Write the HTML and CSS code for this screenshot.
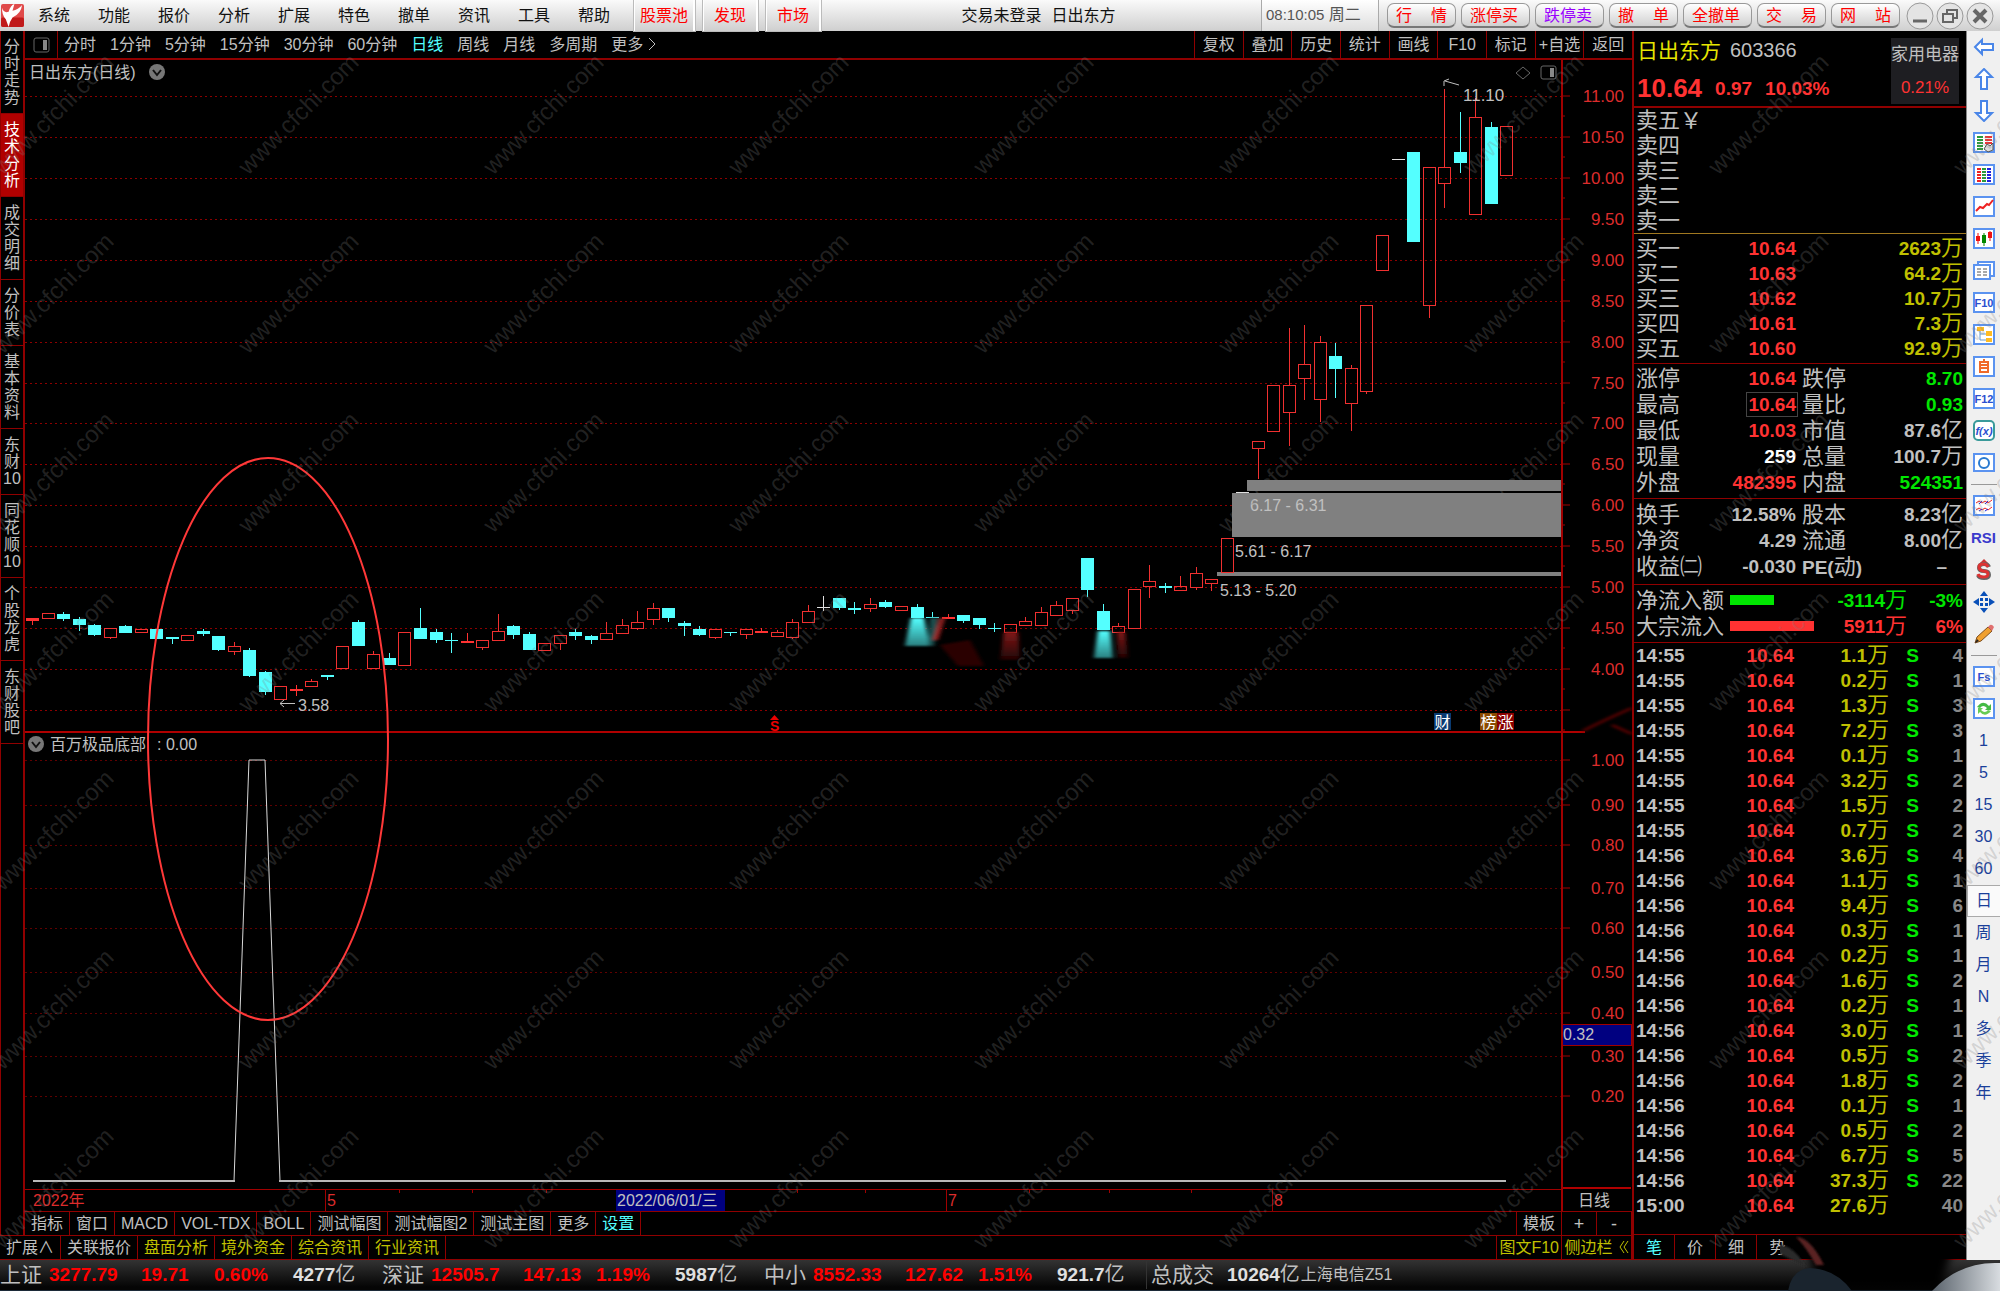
FILE: index.html
```html
<!DOCTYPE html>
<html lang="zh-CN">
<head>
<meta charset="utf-8">
<title>日出东方 603366</title>
<link rel="stylesheet" href="styles.css">
</head>
<body>
<header class="menubar">
  <svg class="logo" viewBox="0 0 24 24" aria-hidden="true"><rect width="24" height="24" rx="2" fill="#e04a4a"/><rect y="14" width="24" height="10" rx="2" fill="#c01a1a"/><path d="M1 4Q3 10 8 8Q10 1 14 0L12 7Q18 6 22 1Q21 10 12 14Q9 18 8 24L5 16Q1 12 1 4Z" fill="#fff"/></svg>
  <nav class="menu">
    <button>系统</button><button>功能</button><button>报价</button><button>分析</button><button>扩展</button><button>特色</button><button>撤单</button><button>资讯</button><button>工具</button><button>帮助</button>
  </nav>
  <nav class="hot"><button>股票池</button><button>发现</button><button>市场</button></nav>
  <div class="apptitle"><span>交易未登录</span><span>日出东方</span></div>
  <div class="clock"><span>08:10:05</span> 周二</div>
  <div class="quick">
    <button><span>行</span><span>情</span></button><button>涨停买</button><button class="violet">跌停卖</button><button><span>撤</span><span>单</span></button><button>全撤单</button><button><span>交</span><span>易</span></button><button><span>网</span><span>站</span></button>
  </div>
  <div class="winctl">
    <button aria-label="最小化"><svg viewBox="0 0 28 28"><circle cx="14" cy="14" r="13"/><path d="M7 19H21" stroke-width="3"/></svg></button>
    <button aria-label="还原"><svg viewBox="0 0 28 28"><circle cx="14" cy="14" r="13"/><path d="M11 12V8H21V16H17M7 12H17V20H7Z" stroke-width="2"/></svg></button>
    <button aria-label="关闭"><svg viewBox="0 0 28 28"><circle cx="14" cy="14" r="13"/><path d="M8 8L20 20M20 8L8 20" stroke-width="4"/></svg></button>
  </div>
</header>

<main class="main">
  <section class="work">
    <div class="upper">
      <nav class="side">
        <button>分时走势</button><button class="on">技术分析</button><button>成交明细</button><button>分价表</button><button>基本资料</button><button>东财10</button><button>同花顺10</button><button>个股龙虎</button><button>东财股吧</button>
      </nav>
      <div class="chartcol">
        <div class="toolbar">
          <button class="panelbtn" aria-label="面板"><svg viewBox="0 0 17 16" width="17" height="16"><rect x="1" y="1" width="15" height="14" rx="2" fill="none" stroke="#666"/><rect x="10" y="3" width="4" height="10" fill="#888"/></svg></button>
          <div class="periods"><button>分时</button><button>1分钟</button><button>5分钟</button><button>15分钟</button><button>30分钟</button><button>60分钟</button><button class="on">日线</button><button>周线</button><button>月线</button><button>多周期</button><button>更多 <svg viewBox="0 0 8 14" width="8" height="14"><path d="M1 1L7 7L1 13" fill="none" stroke="#c0c0c0"/></svg></button></div>
          <div class="actions"><button>复权</button><button>叠加</button><button>历史</button><button>统计</button><button>画线</button><button>F10</button><button>标记</button><button>+自选</button><button>返回</button></div>
        </div>
        <svg class="chart" id="chart" viewBox="25 60 1607 1151" role="img" aria-label="日K线图"></svg>
        <div class="tabs ind">
          <button>指标</button><button>窗口</button><button>MACD</button><button>VOL-TDX</button><button>BOLL</button><button>测试幅图</button><button>测试幅图2</button><button>测试主图</button><button>更多</button><button class="cyan">设置</button>
          <div class="right"><button>模板</button><button class="zoom">+</button><button class="zoom">-</button></div>
        </div>
      </div>
    </div>
    <div class="tabs ext">
      <button>扩展∧</button><button>关联报价</button><button class="gold">盘面分析</button><button class="gold">境外资金</button><button class="gold">综合资讯</button><button class="gold">行业资讯</button>
      <div class="right"><button class="gold">图文F10</button><button class="gold sidebtn">侧边栏<svg viewBox="0 0 10 14" width="10" height="14"><path d="M5 1L1 7L5 13M9 1L5 7L9 13" fill="none" stroke="#c0c000"/></svg></button></div>
    </div>
  </section>

  <aside class="quote">
    <div class="head">
      <div class="line"><h1>日出东方</h1><span class="code">603366</span></div>
      <div class="line red"><b class="price">10.64</b><b>0.97</b><b>10.03%</b></div>
      <div class="sector"><span>家用电器</span><span class="red">0.21%</span></div>
    </div>
    <table class="book asks"><tbody>
      <tr><th>卖五￥</th></tr><tr><th>卖四</th></tr><tr><th>卖三</th></tr><tr><th>卖二</th></tr><tr><th>卖一</th></tr>
    </tbody></table>
    <table class="book bids"><tbody>
      <tr><th>买一</th><td class="red">10.64</td><td class="yel">2623<i>万</i></td></tr>
      <tr><th>买二</th><td class="red">10.63</td><td class="yel">64.2<i>万</i></td></tr>
      <tr><th>买三</th><td class="red">10.62</td><td class="yel">10.7<i>万</i></td></tr>
      <tr><th>买四</th><td class="red">10.61</td><td class="yel">7.3<i>万</i></td></tr>
      <tr><th>买五</th><td class="red">10.60</td><td class="yel">92.9<i>万</i></td></tr>
    </tbody></table>
    <table class="stats"><tbody>
      <tr><th>涨停</th><td class="red">10.64</td><th>跌停</th><td class="grn">8.70</td></tr>
      <tr><th>最高</th><td class="red"><span class="boxed">10.64</span></td><th>量比</th><td class="grn">0.93</td></tr>
      <tr><th>最低</th><td class="red">10.03</td><th>市值</th><td>87.6<i>亿</i></td></tr>
      <tr><th>现量</th><td class="wht">259</td><th>总量</th><td>100.7<i>万</i></td></tr>
      <tr><th>外盘</th><td class="red">482395</td><th>内盘</th><td class="grn">524351</td></tr>
    </tbody></table>
    <table class="stats"><tbody>
      <tr><th>换手</th><td>12.58%</td><th>股本</th><td>8.23<i>亿</i></td></tr>
      <tr><th>净资</th><td>4.29</td><th>流通</th><td>8.00<i>亿</i></td></tr>
      <tr><th>收益㈡</th><td>-0.030</td><th><b>PE(</b>动<b>)</b></th><td class="dash">–</td></tr>
    </tbody></table>
    <div class="flow">
      <div class="grn"><span class="name">净流入额</span><span class="bar" style="width:44px"></span><b>-3114<i>万</i></b><b>-3%</b></div>
      <div class="red"><span class="name">大宗流入</span><span class="bar" style="width:84px"></span><b>5911<i>万</i></b><b>6%</b></div>
    </div>
    <table class="ticks"><tbody id="ticks"></tbody></table>
    <div class="tabs qtabs"><button class="cyan">笔</button><button>价</button><button>细</button><button>势</button></div>
  </aside>

  <nav class="tools">
    <button aria-label="后退"><svg viewBox="0 0 22 22"><path class="arrow" d="M2 11L9 4V8H20V14H9V18Z"/></svg></button>
    <button aria-label="上"><svg viewBox="0 0 22 22"><path class="arrow" d="M11 1L19 9H14V21H8V9H3Z"/></svg></button>
    <button aria-label="下"><svg viewBox="0 0 22 22"><path class="arrow" d="M11 21L19 13H14V1H8V13H3Z"/></svg></button>
    <button aria-label="报价"><svg viewBox="0 0 22 22"><rect class="frame" x="1" y="1" width="20" height="19"/><path d="M4 5H10M4 8H10M4 11H10M4 14H10M4 17H10" stroke="#2a9a3a" stroke-width="2"/><path d="M12 5H19M12 8H19M12 11H19" stroke="#e33" stroke-width="2"/><path d="M11 17L14 12L17 14L20 11V18L15 20Z" fill="#ddd" stroke="#555"/></svg></button>
    <button aria-label="列表"><svg viewBox="0 0 22 22"><rect class="frame" x="1" y="1" width="20" height="19"/><g stroke-width="4" stroke-dasharray="2 1"><path d="M6 4V18" stroke="#e22"/><path d="M11 4V18" stroke="#2a9a3a"/><path d="M16 4V18" stroke="#22d"/></g></svg></button>
    <button aria-label="分时图"><svg viewBox="0 0 22 22"><rect class="frame" x="1" y="1" width="20" height="19"/><path d="M3 15L7 11L10 12L14 8L16 9L20 4" fill="none" stroke="#e22" stroke-width="2"/></svg></button>
    <button aria-label="K线图"><svg viewBox="0 0 22 22"><rect class="frame" x="1" y="1" width="20" height="19"/><path d="M5 5V16M17 3V13" stroke="#e11"/><path d="M3 8H7V13H3ZM15 4H19V10H15Z" fill="#e11"/><path d="M11 5V18" stroke="#080"/><path d="M9 7H13V15H9Z" fill="#080"/></svg></button>
    <button aria-label="窗口"><svg viewBox="0 0 22 22"><rect class="frame" x="5" y="2" width="16" height="14"/><rect class="frame" x="1" y="5" width="16" height="14"/><path d="M4 9H8M4 12H8M4 15H8M10 9H14M10 12H14M10 15H14" stroke="#555"/></svg></button>
    <button aria-label="F10"><svg viewBox="0 0 22 22"><rect class="frame" x="1" y="1" width="20" height="19"/><text x="11" y="15">F10</text></svg></button>
    <button aria-label="树"><svg viewBox="0 0 22 22"><rect class="frame" x="1" y="1" width="20" height="19"/><path d="M7 6V16H13M7 10H13" fill="none" stroke="#69c"/><path d="M4 3H11V7H4ZM13 7H19V12H13ZM13 14H19V18H13Z" fill="#fb2"/></svg></button>
    <button aria-label="自选"><svg viewBox="0 0 22 22"><rect class="frame" x="1" y="1" width="20" height="19"/><path d="M7 6H15V16H7ZM7 9H15M7 12H15M11 3V6" fill="none" stroke="#f06a2a" stroke-width="2"/></svg></button>
    <button aria-label="F12"><svg viewBox="0 0 22 22"><rect class="frame" x="1" y="1" width="20" height="19"/><text x="11" y="15">F12</text></svg></button>
    <button aria-label="公式"><svg viewBox="0 0 22 22"><rect x="1" y="1" width="20" height="19" rx="4" fill="#fff" stroke="#3a9a9a" stroke-width="2"/><text x="11" y="15" font-style="italic">f(x)</text></svg></button>
    <button aria-label="圈"><svg viewBox="0 0 22 22"><rect class="frame" x="1" y="2" width="20" height="17"/><circle cx="11" cy="11" r="5" fill="none" stroke="#2a7ad0" stroke-width="2"/></svg></button>
    <hr>
    <button aria-label="波浪"><svg viewBox="0 0 22 22"><rect class="frame" x="1" y="1" width="20" height="19"/><path d="M3 8L6 6L9 8L12 6L15 8L19 5M3 15L6 13L9 15L12 13L15 15L19 12" fill="none" stroke="#e22" stroke-width="1"/><path d="M6 9L9 6M12 9L15 6M6 16L9 14M12 16L15 14" stroke="#22d"/></svg></button>
    <button class="rsi">RSI</button>
    <button aria-label="除权"><svg viewBox="0 0 22 22"><path d="M11 0L15 4H7Z" fill="#c33"/><path d="M16 8Q15 5 11 5Q6 5 6 9Q6 12 11 12Q16 12 16 16Q16 19 11 19Q6 19 5 16" fill="none" stroke="#666" stroke-width="4"/><path d="M15 8Q14 5 10 5Q6 5 6 8Q6 11 10 12Q15 12 15 15Q15 18 10 18Q6 18 5 15" fill="none" stroke="#d33" stroke-width="3"/></svg></button>
    <button aria-label="移动"><svg viewBox="0 0 22 22"><path d="M11 0L15 5H7ZM11 22L15 17H7ZM0 11L6 7V15ZM22 11L16 7V15ZM7 7H10V10H7ZM12 7H15V10H12ZM7 12H10V15H7ZM12 12H15V15H12Z" fill="#0a50b8"/></svg></button>
    <button aria-label="画笔"><svg viewBox="0 0 22 22"><path d="M2 20L4 14L15 4L19 8L8 18Z" fill="#f0a030" stroke="#805020"/><path d="M15 4L17 2Q19 1 21 4L19 8Z" fill="#e07070"/><path d="M2 20L4 16L6 18Z" fill="#222"/></svg></button>
    <hr>
    <button aria-label="Fs"><svg viewBox="0 0 22 22"><rect class="frame" x="1" y="1" width="20" height="19"/><text x="11" y="15">Fs</text></svg></button>
    <button aria-label="刷新"><svg viewBox="0 0 22 22"><rect class="frame" x="1" y="1" width="20" height="19"/><path d="M4 9Q10 1 16 8L18 6V12H12L14 10Q10 6 7 10Z" fill="#4b4"/><path d="M18 13Q12 20 7 14L5 16V10H10L8 12Q12 16 15 12Z" fill="#6c5"/></svg></button>
    <button>1</button><button>5</button><button>15</button><button>30</button><button>60</button>
    <button class="on">日</button><button>周</button><button>月</button><button>N</button><button>多</button><button>季</button><button>年</button>
  </nav>
</main>

<footer class="status">
  <div class="index"><span>上证</span><b>3277.79</b><b>19.71</b><b>0.60%</b><b class="amt">4277<i>亿</i></b></div>
  <div class="index"><span>深证</span><b>12505.7</b><b>147.13</b><b>1.19%</b><b class="amt">5987<i>亿</i></b></div>
  <div class="index"><span>中小</span><b>8552.33</b><b>127.62</b><b>1.51%</b><b class="amt">921.7<i>亿</i></b></div>
  <div class="total"><span>总成交</span><b class="amt">10264<i>亿</i></b></div>
  <div class="server">上海电信Z51</div>
</footer>

<svg class="corner" viewBox="0 0 220 60" aria-hidden="true">
  <defs><filter id="soft"><feGaussianBlur stdDeviation="4"/></filter><filter id="soft2"><feGaussianBlur stdDeviation="1"/></filter>
  <linearGradient id="pearl" x1="0" x2="1"><stop offset="0" stop-color="#5a636c"/><stop offset="1" stop-color="#d8dce0"/></linearGradient></defs>
  <path d="M22 6L180 8Q170 22 160 58H40Z" fill="#000" filter="url(#soft)"/>
  <path d="M16 6Q30 6 44 34H36Q26 16 16 6Z" fill="#5a2424" filter="url(#soft2)"/>
  <path d="M-4 14Q12 12 26 36L-2 22Z" fill="#2c2c2c" filter="url(#soft2)"/>
  <path d="M8 60Q12 38 30 37Q56 38 72 60Z" fill="#1a242e"/>
  <path d="M152 60Q180 30 220 32V60Z" fill="url(#pearl)"/>
</svg>
<svg class="watermark" id="watermark" aria-hidden="true"></svg>
<script src="app.js"></script>
</body>
</html>
```
FILE: styles.css
```css
* { box-sizing: border-box; }
:root { --line: #900000; --txt: #c0c0c0; --red: #ff3232; --grn: #00e600; --yel: #c0c000; --cyan: #54ffff; }
body { margin: 0; min-height: 100vh; display: flex; flex-direction: column; position: relative; overflow-x: hidden; background: #000; color: var(--txt); font: 16px/22px "Liberation Sans", "Noto Sans CJK SC", sans-serif; }
button { margin: 0; padding: 0; border: 0; background: none; color: inherit; font: inherit; white-space: nowrap; }
i { font-style: normal; font-weight: 400; line-height: 20px; }
table { border-collapse: collapse; table-layout: fixed; width: 100%; }
th, td { padding: 0; }

.menubar { height: 31px; display: flex; align-items: center; background: linear-gradient(#fafafa, #cfcfcf); color: #111; }
.logo { width: 23px; height: 23px; margin: 0 0 0 1px; flex: none; }
.menu { display: flex; width: 610px; }
.menu button { width: 60px; }
.hot { display: flex; gap: 8px; align-self: stretch; color: #f00; }
.hot button { padding: 0 5px; border: 1px solid #fff; border-width: 0 2px 0 1px; outline: 1px solid #bbb; }
.hot button + button { padding: 0 10px; }
.apptitle { flex: 1; display: flex; justify-content: center; gap: 10px; padding-right: 5px; }
.clock { align-self: stretch; width: 118px; padding: 4px 0 0 4px; border: 1px solid #aaa; border-width: 0 1px; color: #555; background: linear-gradient(#fff, #ddd); white-space: nowrap; }
.clock span { font-size: 15px; }
.quick { display: flex; gap: 5px; padding: 0 6px 0 8px; color: #f00; }
.quick button { width: 69px; height: 25px; display: flex; justify-content: space-between; align-items: center; padding: 1px 8px 0; border: 1px solid #999; border-bottom: 2px solid #777; border-radius: 7px; background: linear-gradient(#fff, #d0d0d0); }
.quick button.violet { color: #90f; }
.winctl { display: flex; gap: 2px; padding-right: 6px; }
.winctl button { width: 28px; height: 28px; }
.winctl svg { display: block; fill: #e4e4e4; stroke: #666; }
.winctl circle { stroke: #999; stroke-width: 1; }

.main { flex: 1; display: grid; grid-template-columns: minmax(0, 1fr) 334px 34px; }
.work { display: flex; flex-direction: column; }
.upper { flex: 1; display: grid; grid-template-columns: 25px minmax(0, 1fr); }
.side { border: 1px solid var(--line); border-width: 0 2px 0 1px; }
.side button { display: block; width: 100%; padding: 7px 2px; border-bottom: 1px solid var(--line); line-height: 17px; white-space: normal; word-break: break-all; }
.side .on { background: #b00000; color: #fff; }
.chartcol { display: flex; flex-direction: column; }
.toolbar { height: 29px; display: flex; align-items: stretch; border-bottom: 2px solid var(--line); }
.panelbtn { width: 33px; border-right: 1px solid var(--line); display: flex; align-items: center; justify-content: center; }
.periods { display: flex; gap: 14px; padding-left: 6px; flex: 1; }
.periods svg { vertical-align: -1px; }
.on { color: var(--cyan); }
.actions { width: 438px; display: grid; grid-template-columns: repeat(9, 1fr); }
.actions button { border-left: 1px solid var(--line); }
.chart { display: block; width: 100%; height: auto; }
.chart text { font-size: 16px; }

.tabs { display: flex; border-top: 1px solid var(--line); }
.tabs button { padding: 0 6px; border-right: 1px solid var(--line); }
.tabs .right { margin-left: auto; display: flex; border-left: 1px solid var(--line); }
.tabs .cyan { color: var(--cyan); }
.tabs .gold { color: var(--yel); }
.ind { height: 24px; }
.ind .zoom { width: 35px; font-size: 18px; }
.ext { height: 25px; border-bottom: 1px solid var(--line); }
.ext .right button { padding: 0 2px; }
.ext .sidebtn { width: 70px; }
.sidebtn svg { margin-left: 6px; vertical-align: -1px; }

.quote { border-left: 2px solid var(--line); display: flex; flex-direction: column; font-size: 19px; line-height: 25px; }
.quote > * { padding: 0 3px 0 2px; border-bottom: 1px solid var(--line); }
.red { color: var(--red); } .grn { color: var(--grn); } .yel { color: var(--yel); } .wht { color: #fff; }
.quote i, .quote th { font-size: 22px; font-weight: 400; }
.head { height: 77px; display: grid; grid-template: 39px 37px / 1fr 68px; }
.quote > .head { padding: 0 7px 0 3px; border-bottom-width: 2px; }
.head .line { display: flex; align-items: center; gap: 9px; }
.head .line.red { gap: 13px; }
.head h1 { margin: 0; color: #e6e600; font-size: 21px; font-weight: 400; }
.code { font-size: 20px; }
.price { font-size: 26px; }
.sector { grid-area: 1 / 2 / 3 / 3; margin: 7px 0 3px; background: #1e1e22; display: flex; flex-direction: column; justify-content: space-around; align-items: center; font-size: 17px; }
.book, .stats, .ticks, .book tbody, .stats tbody, .ticks tbody { display: block; }
.book tr { display: grid; grid-template-columns: 80px 80px 1fr; height: 25px; }
.book.asks { border-bottom: 1px solid #a07820; }
.book.asks tr { grid-template-columns: 1fr; }
.quote > .bids { padding-top: 2px; padding-bottom: 2px; }
.book th, .stats th { text-align: left; white-space: nowrap; }
.book td, .stats td { text-align: right; font-weight: 700; white-space: nowrap; }
.quote > .stats { padding-top: 2px; padding-bottom: 2px; }
.stats tr { display: grid; grid-template-columns: 71px 89px 82px 1fr; height: 26px; line-height: 26px; }
.stats th:nth-child(3) { padding-left: 6px; }
.stats th b { font-size: 19px; }
.stats td.dash { padding-right: 16px; }
.quote > .stats + .stats { padding-top: 3px; padding-bottom: 4px; }
.boxed { outline: 1px solid #444; outline-offset: 1px; }
.quote > .flow { padding-top: 2px; padding-bottom: 3px; }
.flow div { display: grid; grid-template-columns: 94px 85px 92px 1fr; align-items: center; height: 26px; }
.flow .name { color: var(--txt); font-size: 22px; }
.flow .bar { height: 10px; background: currentColor; }
.flow b { text-align: right; white-space: nowrap; }
.ticks { flex: 1; }
.ticks tr { display: grid; grid-template-columns: 60px 98px 95px 47px 1fr; height: 25px; }
.ticks td { text-align: right; font-weight: 700; white-space: nowrap; }
.ticks td:nth-child(1) { text-align: left; }
.ticks td:nth-child(4) { text-align: center; }
.ticks td:nth-child(5) { color: #888; }
.quote > .qtabs { padding: 0; height: 25px; border-top: 0; font-size: 16px; }
.qtabs button { width: 41px; }
.qtabs button:last-child { border-right: 0; }

.tools { background: #f0f0f0; border-left: 1px solid #888; color: #1a3f9a; display: flex; flex-direction: column; align-items: center; }
.tools button { width: 100%; height: 32px; flex: none; display: flex; align-items: center; justify-content: center; }
.tools svg { width: 22px; height: 22px; }
.tools .on { background: #fafafa; border: 1px solid #aaa; border-right: 0; color: #1a3f9a; }
.tools .rsi { font-size: 15px; font-weight: 700; color: #3a3acc; }
.tools hr { width: 26px; margin: 5px 0; border: 0; border-top: 1px solid #999; }
.tools text { font-size: 11px; font-weight: 700; fill: #2a4fd0; text-anchor: middle; }
.frame { fill: #fff; stroke: #5b93f0; stroke-width: 2; }
.arrow { fill: #fff; stroke: #4a86e8; stroke-width: 2; }

.status { height: 31px; display: flex; align-items: center; background: linear-gradient(#333, #050505 90%); border-bottom: 1px solid #1c2a38; font-size: 21px; line-height: 28px; white-space: nowrap; }
.index { display: grid; grid-template-columns: 49px 92px 73px 79px 89px; align-items: center; }
.status b { color: #f00; font-size: 19px; }
.status .amt { color: #e0e0e0; }
.status .amt i { color: var(--txt); font-size: 20px; }
.total { display: flex; gap: 13px; padding-left: 4px; border-left: 1px solid #333; }
.server { font-size: 16px; padding-left: 1px; }

.corner { position: absolute; right: 0; bottom: 0; width: 220px; height: 60px; pointer-events: none; }
.watermark { position: absolute; inset: 0; width: 100%; height: 100%; pointer-events: none; }
.watermark text { font-size: 24px; fill: #808080; fill-opacity: 0.27; }
```
FILE: app.js
```js
// One row per day: kind (r hollow, f flat red, c falling, w unchanged), body top, body bottom, wick top, wick bottom
const days = `f 618 621 618 625|r 613 618|c 614 619 612 621|c 619 625 617 631|c 625 635 624 636|r 628 637 628 639|c 626 633 625 633|r 629 632|c 629 639|c 637 639 637 644
r 635 640|c 631 634 629 636|c 636 650 636 651|r 646 651 642 655|c 650 676 648 677|c 672 692 671 695|r 686 699|f 689 691 685 696|r 681 686 679 687|c 675 677 675 680
r 646 668|c 622 646 620 646|r 654 668 651 668|c 658 665 653 665|r 632 665|c 628 639 608 639|c 632 640 629 643|c 640 641 633 653|f 641 643 633 643|r 640 647 640 650
r 631 640 614 640|c 626 635 625 639|c 634 650 632 650|r 643 650|r 635 643 635 650|c 632 636 629 640|c 636 640 635 644|r 633 639 622 639|r 625 633 619 633|r 622 628 611 630
r 608 619 603 625|c 608 618 608 622|c 623 626 621 636|c 629 635 626 636|r 629 637 629 639|c 632 633 632 636|r 629 634 629 639|f 631 633 628 633|r 632 636 630 637|r 622 637 619 639
r 611 622 605 622|w 607 608 596 611|c 598 608 598 610|c 608 610 602 614|r 604 608 598 612|c 602 607 600 608|r 606 610|c 607 618 604 618|c 617 618 612 618|f 617 619 614 619
c 615 621 615 623|c 618 625 618 629|c 628 629 623 632|r 624 632|r 621 625 617 625|r 612 625 607 625|r 605 615 601 615|r 598 610 598 614|c 558 590 558 597|c 611 630 604 630
r 626 632 623 632|r 589 628|r 581 586 565 598|c 586 588 583 593|r 586 590 576 590|r 573 587 567 590|r 579 583 579 591|r 538 572|w 492 493|r 441 448 441 479
r 385 431|r 385 412 328 446|r 364 378 325 400|r 342 399 336 422|c 356 369 343 398|r 368 403 365 431|r 305 391 305 394|r 235 270|w 159 160|c 152 242
r 167 305 167 318|r 167 183 89 208|c 152 163 112 173|r 117 214 98 214|c 127 204 122 204|r 126 175`.split(/[|\n]/);
const colors = { r: '#f03030', f: '#ff3232', c: '#54ffff', w: '#e0e0e0' };
const dark = '#a00000', label = '#dc2c2c', gray = '#c0c0c0';
const line = (x1, y1, x2, y2, c, extra = '') => `<path d="M${x1} ${y1}L${x2} ${y2}" stroke="${c}" ${extra}/>`;
const text = (x, y, s, c = gray, extra = '') => `<text x="${x}" y="${y}" fill="${c}" ${extra}>${s}</text>`;
const rect = (x, y, w, h, c) => `<rect x="${x}" y="${y}" width="${w}" height="${h}" fill="${c}"/>`;
let out = '';

for (let k = 0; k < 16; k++) {
  const y = Math.round(96 + k * 40.93);
  out += line(25, y + .5, 1561, y + .5, '#8c0000', 'stroke-dasharray="2 3"') + line(1562, y, 1570, y, dark) + line(1562, y + 20, 1565, y + 20, dark);
  if (k < 15) out += text(1624, y + 6, (11 - k / 2).toFixed(2), label, 'text-anchor="end" style="font-size:17px"');
}
[760, 805, 845, 888, 928, 972, 1013, 1056, 1096].forEach((y, k) => {
  out += line(25, y + .5, 1561, y + .5, '#600000', 'stroke-dasharray="2 3"') + line(1562, y, 1570, y, dark)
    + text(1624, y + 6, (1 - k / 10).toFixed(2), label, 'text-anchor="end" style="font-size:17px"');
});

out += rect(1247, 480, 314, 11, '#808080') + rect(1232, 493, 329, 44, '#808080') + rect(1217, 572, 344, 4, '#808080');
out += text(1250, 511, '6.17 - 6.31') + text(1235, 557, '5.61 - 6.17') + text(1220, 596, '5.13 - 5.20');

days.forEach((row, k) => {
  const [t, ...n] = row.split(' ');
  const [a, b, hi, lo] = n.map(Number);
  const x = Math.round(32.1 + k * 15.516), c = colors[t];
  if (hi) out += rect(x, hi, 1, a - hi, c) + rect(x, b, 1, lo - b, c);
  if (t === 'r') out += `<rect x="${x - 5.5}" y="${a + .5}" width="12" height="${b - a}" fill="none" stroke="${c}"/>`;
  else out += rect(x - 6, a, 13, Math.max(b - a, 1), c);
});

// Faded bodies below the June and July bars
out += `<defs><linearGradient id="fc" x2="0" y2="1"><stop stop-color="#54ffff"/><stop offset="1" stop-color="#2a8080"/></linearGradient><linearGradient id="fr" x2="0" y2="1"><stop stop-color="#801818"/><stop offset="1" stop-color="#200404"/></linearGradient><filter id="fb" x="-50%" width="200%"><feGaussianBlur stdDeviation="2 1"/></filter></defs>
<g filter="url(#fb)"><path d="M911 618H924L930 646H905Z" fill="url(#fc)"/><path d="M930 618H938L934 646H928Z" fill="#1a5050"/><path d="M940 618H945L938 640H933Z" fill="#a02020"/><path d="M940 645L970 640L984 666H958Z" fill="#2c0000"/><path d="M1004 632H1018L1020 660H1000Z" fill="url(#fr)"/><path d="M1098 631H1110L1113 658H1094Z" fill="url(#fc)"/><path d="M1117 632H1125L1128 658H1118Z" fill="url(#fr)"/></g>`;

const arrow = d => `<path d="${d}" fill="none" stroke="${gray}"/>`;
out += arrow('M1459 85L1445 81M1449 79L1444 81V86') + text(1463, 101, '11.10', gray, 'style="font-size:17px"');
out += arrow('M295 703.5H280M284 700L280 703.5L284 707') + text(298, 711, '3.58', gray);
out += text(29, 78, '日出东方(日线)') + text(50, 750, '百万极品底部') + text(157, 750, ': 0.00');
[[157, 72], [36, 744]].forEach(([x, y]) => out += `<circle cx="${x}" cy="${y}" r="8" fill="#777"/><path d="M${x - 4} ${y - 2}L${x} ${y + 3}L${x + 4} ${y - 2}" fill="none" stroke="#111" stroke-width="2"/>`);
out += '<path d="M1523 67L1530 73L1523 79L1516 73Z" fill="none" stroke="#666"/><rect x="1541" y="66" width="15" height="13" rx="2" fill="none" stroke="#666"/><rect x="1550" y="68" width="4" height="9" fill="#888"/>';

out += '<path d="M774.5 715L779 720H770Z" fill="#e00"/>' + text(770, 731, 'S', '#e00', 'style="font-size:14px;font-weight:700"');
[[1434, '财', '#0a3a70'], [1480, '榜', '#8a4a00'], [1497, '涨', '#8a0000']].forEach(([x, s, c]) => out += rect(x, 713, 17, 17, c) + text(x + .5, 728, s, '#fff'));

// Frame, second pane and its indicator
out += line(25, 732, 1585, 732, '#b00000', 'stroke-width="2"') + line(1562, 60, 1562, 1211, dark, 'stroke-width="2"') + line(1563, 1188, 1631, 1188, '#b00000', 'stroke-width="2"');
out += '<g filter="url(#fb)"><path d="M1583 731Q1600 722 1632 708" fill="none" stroke="#500" stroke-width="3"/><path d="M1612 725L1632 734" stroke="#500" stroke-width="3"/></g>';
out += '<path d="M234 1181L249 760H265L280 1181" fill="none" stroke="#d8d8d8"/><path d="M33 1181H235M279 1181H1506" fill="none" stroke="#b8b8b8" stroke-width="2"/>';
out += '<ellipse cx="268" cy="739" rx="120" ry="281" fill="none" stroke="#ff3838" stroke-width="2"/>';
out += rect(1562, 1024, 70, 22, dark) + rect(1563, 1025, 68, 20, '#000080') + text(1563, 1040, '0.32');

out += line(25, 1189.5, 1562, 1189.5, dark);
[399, 472, 546, 797, 865, 1029, 1109, 1191].forEach(x => out += line(x + .5, 1190, x + .5, 1193, dark));
[[325, '5'], [946, '7'], [1272, '8']].forEach(([x, s]) => out += line(x + .5, 1190, x + .5, 1211, dark) + text(x + 2, 1206, s, label));
out += text(33, 1206, '2022年', label) + rect(616, 1190, 109, 21, '#000080') + text(617, 1206, '2022/06/01/三') + text(1578, 1206, '日线');
document.getElementById('chart').innerHTML = out;

const ticks = '1.1 4,0.2 1,1.3 3,7.2 3,0.1 1,3.2 2,1.5 2,0.7 2,3.6 4,1.1 1,9.4 6,0.3 1,0.2 1,1.6 2,0.2 1,3.0 1,0.5 2,1.8 2,0.1 1,0.5 2,6.7 5,37.3 22,27.6 40'.split(',');
document.getElementById('ticks').innerHTML = ticks.map((s, k) => {
  const [v, n] = s.split(' ');
  const last = k === ticks.length - 1;
  const time = k < 8 ? '14:55' : last ? '15:00' : '14:56';
  return `<tr><td>${time}</td><td class="red">10.64</td><td class="yel">${v}<i>万</i></td><td class="grn">${last ? '' : 'S'}</td><td>${n}</td></tr>`;
}).join('');

let marks = '';
for (let r = 0; r < 7; r++) for (let c = 0; c < 9; c++) {
  marks += `<text transform="translate(${c * 245 + 3} ${r * 179 + 176}) rotate(-45)">www.cfchi.com</text>`;
}
document.getElementById('watermark').innerHTML = marks;
```
